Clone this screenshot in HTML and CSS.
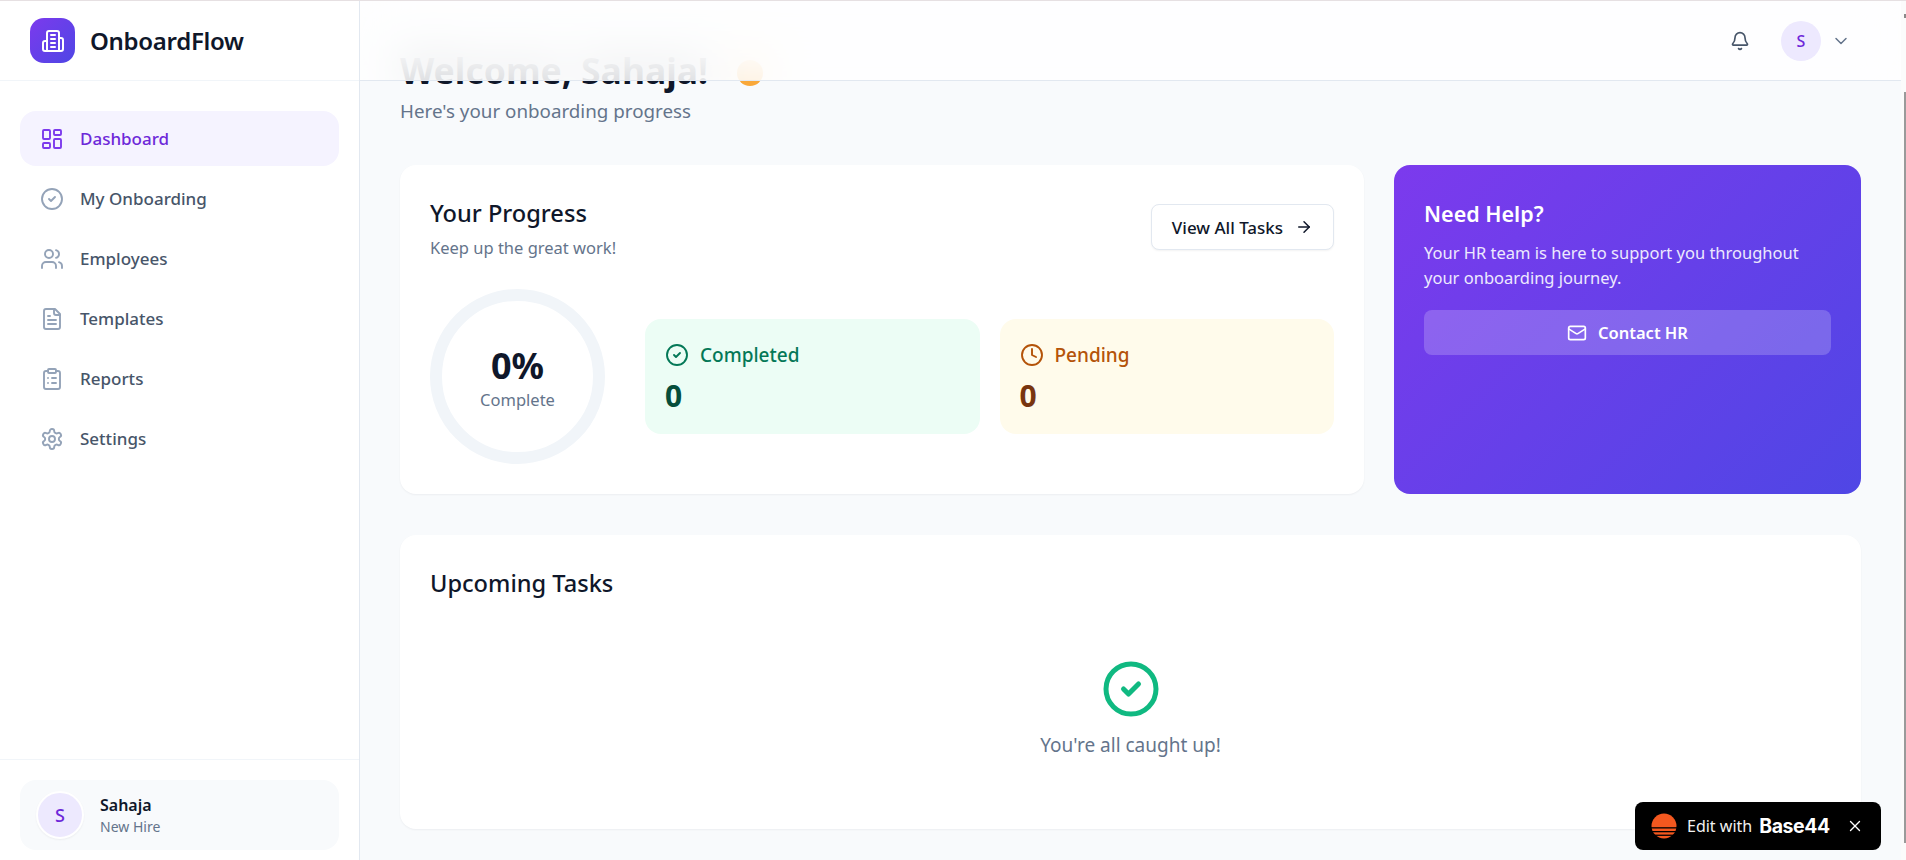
FILE: index.html
```html
<!DOCTYPE html>
<html lang="en">
<head>
<meta charset="utf-8">
<title>OnboardFlow</title>
<link rel="stylesheet" href="styles.css">
</head>
<body>
<div class="app">
  <aside class="sidebar">
    <div class="brand">
      <div class="logo">
        <svg viewBox="0 0 24 24" class="logo-ic"><path d="M6 22V4a2 2 0 0 1 2-2h8a2 2 0 0 1 2 2v18Z"/><path d="M6 12H4a2 2 0 0 0-2 2v6a2 2 0 0 0 2 2h2"/><path d="M18 9h2a2 2 0 0 1 2 2v9a2 2 0 0 1-2 2h-2"/><path d="M10 6h4"/><path d="M10 10h4"/><path d="M10 14h4"/><path d="M10 18h4"/></svg>
      </div>
      <span class="brand-name">OnboardFlow</span>
    </div>
    <nav class="nav">
      <a class="nav-item active"><svg viewBox="0 0 24 24" class="ic"><rect width="7" height="9" x="3" y="3" rx="1"/><rect width="7" height="5" x="14" y="3" rx="1"/><rect width="7" height="9" x="14" y="12" rx="1"/><rect width="7" height="5" x="3" y="16" rx="1"/></svg>Dashboard</a>
      <a class="nav-item"><svg viewBox="0 0 24 24" class="ic"><circle cx="12" cy="12" r="10"/><path d="m9 12 2 2 4-4"/></svg>My Onboarding</a>
      <a class="nav-item"><svg viewBox="0 0 24 24" class="ic"><path d="M16 21v-2a4 4 0 0 0-4-4H6a4 4 0 0 0-4 4v2"/><circle cx="9" cy="7" r="4"/><path d="M22 21v-2a4 4 0 0 0-3-3.87"/><path d="M16 3.13a4 4 0 0 1 0 7.75"/></svg>Employees</a>
      <a class="nav-item"><svg viewBox="0 0 24 24" class="ic"><path d="M15 2H6a2 2 0 0 0-2 2v16a2 2 0 0 0 2 2h12a2 2 0 0 0 2-2V7Z"/><path d="M14 2v4a2 2 0 0 0 2 2h4"/><path d="M10 9H8"/><path d="M16 13H8"/><path d="M16 17H8"/></svg>Templates</a>
      <a class="nav-item"><svg viewBox="0 0 24 24" class="ic"><rect width="8" height="4" x="8" y="2" rx="1"/><path d="M16 4h2a2 2 0 0 1 2 2v14a2 2 0 0 1-2 2H6a2 2 0 0 1-2-2V6a2 2 0 0 1 2-2h2"/><path d="M12 11h4"/><path d="M12 16h4"/><path d="M8 11h.01"/><path d="M8 16h.01"/></svg>Reports</a>
      <a class="nav-item"><svg viewBox="0 0 24 24" class="ic"><path d="M12.22 2h-.44a2 2 0 0 0-2 2v.18a2 2 0 0 1-1 1.73l-.43.25a2 2 0 0 1-2 0l-.15-.08a2 2 0 0 0-2.73.73l-.22.38a2 2 0 0 0 .73 2.73l.15.1a2 2 0 0 1 1 1.72v.51a2 2 0 0 1-1 1.74l-.15.09a2 2 0 0 0-.73 2.73l.22.38a2 2 0 0 0 2.73.73l.15-.08a2 2 0 0 1 2 0l.43.25a2 2 0 0 1 1 1.73V20a2 2 0 0 0 2 2h.44a2 2 0 0 0 2-2v-.18a2 2 0 0 1 1-1.73l.43-.25a2 2 0 0 1 2 0l.15.08a2 2 0 0 0 2.73-.73l.22-.39a2 2 0 0 0-.73-2.73l-.15-.08a2 2 0 0 1-1-1.74v-.5a2 2 0 0 1 1-1.74l.15-.09a2 2 0 0 0 .73-2.73l-.22-.38a2 2 0 0 0-2.73-.73l-.15.08a2 2 0 0 1-2 0l-.43-.25a2 2 0 0 1-1-1.73V4a2 2 0 0 0-2-2z"/><circle cx="12" cy="12" r="3"/></svg>Settings</a>
    </nav>
    <div class="side-foot">
      <div class="user-card">
        <div class="avatar ringed">S</div>
        <div class="user-text">
          <div class="user-name">Sahaja</div>
          <div class="user-role">New Hire</div>
        </div>
      </div>
    </div>
  </aside>

  <div class="main">
    <header class="topbar">
      <svg viewBox="0 0 24 24" class="bell"><path d="M10.268 21a2 2 0 0 0 3.464 0"/><path d="M3.262 15.326A1 1 0 0 0 4 17h16a1 1 0 0 0 .74-1.673C19.41 13.956 18 12.499 18 8A6 6 0 0 0 6 8c0 4.499-1.411 5.956-2.738 7.326"/></svg>
      <div class="avatar small">S</div>
      <svg viewBox="0 0 24 24" class="chev"><path d="m6 9 6 6 6-6"/></svg>
    </header>
    <main class="content">
      <h1 class="welcome">Welcome, Sahaja! <svg class="wave" viewBox="0 0 36 36"><circle cx="18" cy="19" r="13"/></svg></h1>
      <p class="sub">Here's your onboarding progress</p>

      <div class="top-row">
        <section class="card progress">
          <div class="card-head">
            <div>
              <h2 class="card-title">Your Progress</h2>
              <p class="card-sub">Keep up the great work!</p>
            </div>
            <button class="outline-btn">View All Tasks <svg viewBox="0 0 24 24" class="ic16"><path d="M5 12h14"/><path d="m12 5 7 7-7 7"/></svg></button>
          </div>
          <div class="stats">
            <div class="ring">
              <div class="pct">0%</div>
              <div class="ring-label">Complete</div>
            </div>
            <div class="stat green">
              <div class="stat-label"><svg viewBox="0 0 24 24" class="ic"><circle cx="12" cy="12" r="10"/><path d="m9 12 2 2 4-4"/></svg>Completed</div>
              <div class="stat-value">0</div>
            </div>
            <div class="stat amber">
              <div class="stat-label"><svg viewBox="0 0 24 24" class="ic"><circle cx="12" cy="12" r="10"/><polyline points="12 6 12 12 16 14"/></svg>Pending</div>
              <div class="stat-value">0</div>
            </div>
          </div>
        </section>
        <section class="help">
          <h3 class="help-title">Need Help?</h3>
          <p class="help-text">Your HR team is here to support you throughout your onboarding journey.</p>
          <button class="help-btn"><svg viewBox="0 0 24 24" class="ic20"><rect width="20" height="16" x="2" y="4" rx="2"/><path d="m22 7-8.97 5.7a1.94 1.94 0 0 1-2.06 0L2 7"/></svg>Contact HR</button>
        </section>
      </div>

      <section class="card upcoming">
        <h2 class="card-title">Upcoming Tasks</h2>
        <div class="empty">
          <svg viewBox="0 0 24 24" class="empty-ic"><circle cx="12" cy="12" r="10"/><path d="m9 12 2 2 4-4"/></svg>
          <p class="empty-text">You're all caught up!</p>
        </div>
      </section>
    </main>
  </div>
  <div class="scrollbar">
    <span class="sb-tick"></span>
    <span class="sb-thumb"></span>
    <span class="sb-tick"></span>
  </div>
</div>

<div class="badge">
  <svg viewBox="0 0 26 26" class="badge-logo"><circle cx="13" cy="13" r="12.5" fill="#f4581f"/><rect y="14.2" width="26" height="1.3" fill="#000"/><rect y="18" width="26" height="1.3" fill="#000"/><rect y="21.6" width="26" height="1.3" fill="#000"/></svg>
  <span class="badge-text">Edit with</span>
  <span class="badge-brand">Base44</span>
  <svg viewBox="0 0 24 24" class="badge-x"><path d="M18 6 6 18"/><path d="m6 6 12 12"/></svg>
</div>
</body>
</html>
```

FILE: styles.css
```css
* { box-sizing: border-box; }
html, body { margin: 0; height: 100%; overflow: hidden; }
body { font-family: "Noto Sans", "Open Sans", sans-serif; color: #0f172a; background: #f8fafc; }
h1, h2, h3, p { margin: 0; }
svg { fill: none; stroke: currentColor; stroke-width: 2; stroke-linecap: round; stroke-linejoin: round; flex: none; }

.app { display: flex; height: 860px; border-top: 1px solid #e6e0e2; }

.sidebar { width: 360px; flex: none; background: #fff; border-right: 1px solid #e2e8f0; display: flex; flex-direction: column; }
.brand { height: 80px; flex: none; display: flex; align-items: center; gap: 15px; padding: 0 30px; border-bottom: 1px solid #f1f5f9; }
.logo { width: 45px; height: 45px; border-radius: 14px; background: linear-gradient(135deg, #7c3aed, #4f46e5); display: flex; align-items: center; justify-content: center; color: #fff; }
.logo-ic { width: 24px; height: 24px; }
.brand-name { font-size: 24px; font-weight: 600; letter-spacing: -0.3px; }

.nav { flex: 1; padding: 30px 20px; display: flex; flex-direction: column; gap: 5px; }
.nav-item { height: 55px; display: flex; align-items: center; gap: 16px; padding: 0 20px; border-radius: 16px; font-size: 17px; font-weight: 500; color: #475569; }
.nav-item .ic { color: #94a3b8; }
.nav-item.active { background: #f5f3ff; color: #6d28d9; }
.nav-item.active .ic { color: #7c3aed; }
.ic { width: 24px; height: 24px; stroke-width: 1.9; }
.ic16 { width: 18px; height: 18px; }
.ic20 { width: 20px; height: 20px; }

.side-foot { flex: none; padding: 20px 20px 10px; border-top: 1px solid #f1f5f9; }
.user-card { height: 70px; background: #f8fafc; border-radius: 16px; display: flex; align-items: center; gap: 16px; padding: 0 16px; }
.avatar { width: 40px; height: 40px; border-radius: 50%; background: #ede9fe; color: #6d28d9; display: flex; align-items: center; justify-content: center; font-size: 18px; font-weight: 500; }
.avatar.ringed { width: 48px; height: 48px; border: 2px solid #fff; box-shadow: 0 1px 2px rgba(0,0,0,.05); }
.user-name { font-size: 16px; font-weight: 600; line-height: 22px; }
.user-role { font-size: 14px; color: #64748b; line-height: 21px; }

.main { flex: 1; position: relative; min-width: 0; overflow: hidden; }
.topbar { position: absolute; top: 0; left: 0; right: 0; height: 80px; background: rgba(255,255,255,.8); backdrop-filter: blur(24px); border-bottom: 1px solid #e2e8f0; display: flex; align-items: center; justify-content: flex-end; padding-right: 50px; z-index: 2; }
.bell { width: 20px; height: 20px; color: #475569; margin-right: 31px; }
.avatar.small { font-size: 16px; }
.chev { width: 20px; height: 20px; color: #64748b; margin-left: 10px; stroke-width: 1.8; }

.content { padding: 49px 40px 0; }
.welcome { font-size: 35.5px; line-height: 40px; font-weight: 700; margin-bottom: 7px; }
.wave { width: 36px; height: 36px; vertical-align: -6px; margin-left: 15px; fill: #f9a83a; stroke: none; }
.sub { font-size: 18.8px; line-height: 28px; color: #64748b; margin-bottom: 40px; }

.top-row { display: grid; grid-template-columns: 964px 467px; gap: 30px; margin-bottom: 41px; }
.card { background: #fff; border-radius: 16px; box-shadow: 0 1px 2px rgba(15,23,42,.05); }
.progress { height: 329px; padding: 30px; }
.card-head { display: flex; justify-content: space-between; align-items: flex-start; margin-bottom: 29px; }
.card-title { font-size: 23.6px; font-weight: 500; line-height: 32px; margin-top: 2px; }
.card-sub { font-size: 16.5px; line-height: 24px; color: #64748b; margin-top: 7px; }
.outline-btn { height: 46px; width: 183px; margin-top: 9px; background: #fff; border: 1px solid #e2e8f0; border-radius: 8px; box-shadow: 0 1px 2px rgba(0,0,0,.05); font: 500 17px "Noto Sans", sans-serif; color: #0f172a; display: flex; align-items: center; justify-content: center; gap: 12px; }

.stats { display: flex; align-items: center; gap: 20px; }
.ring { width: 175px; height: 175px; flex: none; border: 12px solid #f1f5f9; border-radius: 50%; display: flex; flex-direction: column; align-items: center; justify-content: center; margin-right: 20px; padding-top: 4px; }
.pct { font-size: 36px; font-weight: 700; line-height: 40px; }
.ring-label { font-size: 16.5px; line-height: 25px; color: #64748b; margin-top: 1px; }
.stat { flex: 1; height: 115px; border-radius: 16px; padding: 22px 20px 0; }
.stat.green { background: #ecfdf5; }
.stat.amber { background: #fffbeb; }
.stat-label { display: flex; align-items: center; gap: 11px; font-size: 19px; font-weight: 500; line-height: 28px; }
.green .stat-label { color: #047857; }
.amber .stat-label { color: #b45309; }
.stat-value { font-size: 30px; font-weight: 700; line-height: 36px; margin-top: 9px; }
.green .stat-value { color: #064e3b; }
.amber .stat-value { color: #78350f; }

.help { height: 329px; border-radius: 16px; padding: 33px 30px 0; background: linear-gradient(135deg, #7c3aed, #4f46e5); color: #fff; }
.help-title { font-size: 21.5px; font-weight: 600; line-height: 32px; margin-bottom: 10px; }
.help-text { font-size: 16.5px; line-height: 25px; color: #ede9fe; margin-bottom: 20px; }
.help-btn { width: 100%; height: 45px; border: 0; border-radius: 8px; background: rgba(255,255,255,.2); color: #fff; font: 600 16.5px "Noto Sans", sans-serif; display: flex; align-items: center; justify-content: center; gap: 11px; }

.upcoming { height: 294px; padding: 30px; }
.empty { display: flex; flex-direction: column; align-items: center; padding-top: 60px; }
.empty-ic { width: 60px; height: 60px; color: #10b981; stroke-width: 2; }
.empty-text { font-size: 19px; line-height: 28px; color: #64748b; margin-top: 12px; }

.scrollbar { width: 5px; flex: none; background: #fbfbfb; display: flex; flex-direction: column; align-items: flex-end; }
.sb-tick { width: 2px; height: 4px; background: #8a8a8a; margin: 13px 0 0; flex: none; }
.sb-thumb { width: 2px; flex: none; height: 751px; margin: 74px 0 10px; background: #9a9a9a; }

.badge { position: fixed; left: 1635px; top: 802px; width: 246px; height: 48px; background: #000; border-radius: 8px; color: #fff; display: flex; align-items: center; padding-left: 16px; }
.badge-logo { width: 26px; height: 26px; stroke: none; margin-right: 10px; }
.badge-text { font-size: 16px; margin-right: 7px; color: #f1f1f1; }
.badge-brand { font-family: "Inter", sans-serif; font-weight: 700; font-size: 19.5px; letter-spacing: -.4px; }
.badge-x { width: 18px; height: 18px; margin-left: 16px; stroke-width: 1.8; }
```
